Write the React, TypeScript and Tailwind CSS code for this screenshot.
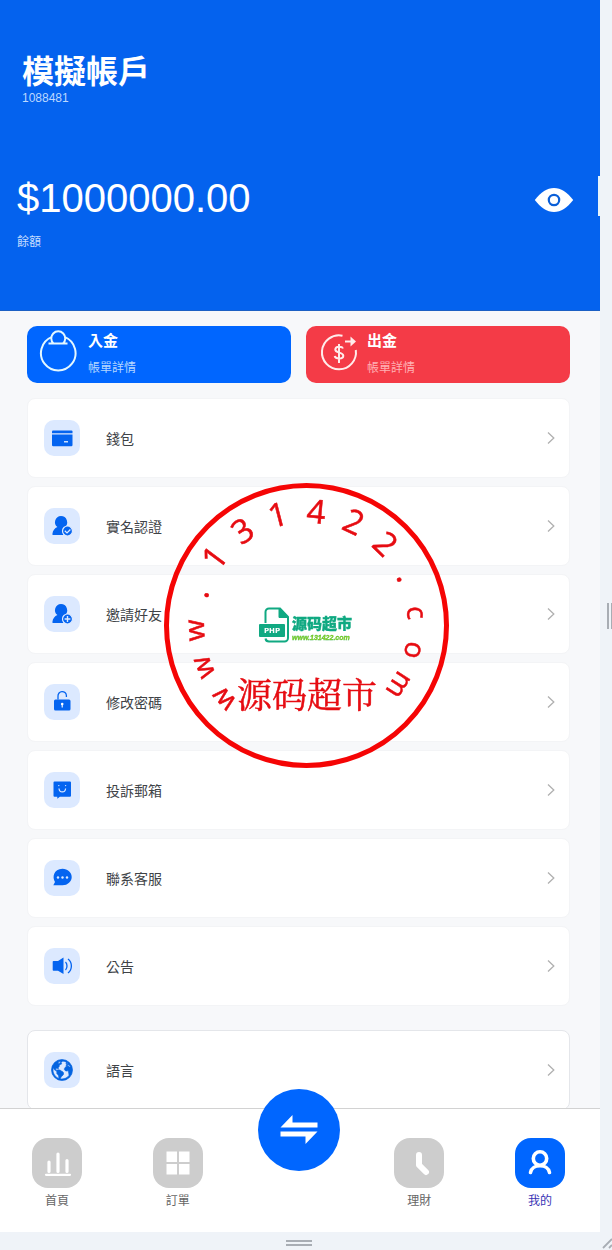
import type { ReactNode } from "react";
import { IoEarth } from "react-icons/io5";

const SANS = "font-['Liberation_Sans','Noto_Sans_CJK_TC',sans-serif]";

const menu: { label: string; icon: ReactNode }[] = [
  {
    label: "錢包",
    icon: (
      <svg viewBox="0 0 36 36" className="w-9 h-9" fill="#0464f0">
        <path d="M9 10.500h18.500a1 1 0 0 1 1 1v1.800H8v-1.800a1 1 0 0 1 1-1z" />
        <path d="M8 14.500h20.500V25a1.200 1.200 0 0 1-1.200 1.200H9.200A1.200 1.200 0 0 1 8 25z" />
        <path d="M20 21.800h4" stroke="#fff" strokeWidth="1.200" />
      </svg>
    ),
  },
  {
    label: "實名認證",
    icon: (
      <svg viewBox="0 0 36 36" className="w-9 h-9" fill="#0464f0">
        <Person />
        <circle cx="23.500" cy="23" r="5" fill="#0464f0" stroke="#dce9ff" strokeWidth="1.200" />
        <path d="M20.800 22.800l2.200 2.100 3.400-3.400" fill="none" stroke="#dce9ff" strokeWidth="1.300" />
      </svg>
    ),
  },
  {
    label: "邀請好友",
    icon: (
      <svg viewBox="0 0 36 36" className="w-9 h-9" fill="#0464f0">
        <Person />
        <circle cx="23.500" cy="23" r="5" fill="#0464f0" stroke="#dce9ff" strokeWidth="1.200" />
        <path d="M20.600 23h5.800M23.500 20.100v5.800" stroke="#dce9ff" strokeWidth="1.400" />
      </svg>
    ),
  },
  {
    label: "修改密碼",
    icon: (
      <svg viewBox="0 0 36 36" className="w-9 h-9">
        <rect x="10" y="15.500" width="16.500" height="11" rx="1.500" fill="#0464f0" />
        <path d="M14 15.500v-3.500a4.200 4.200 0 0 1 8.400-.500v1.500" fill="none" stroke="#0464f0" strokeWidth="1.300" />
        <circle cx="18.200" cy="20" r="1.300" fill="#fff" />
        <path d="M18.200 20v3.400" stroke="#fff" strokeWidth="1.100" />
      </svg>
    ),
  },
  {
    label: "投訴郵箱",
    icon: (
      <svg viewBox="0 0 36 36" className="w-9 h-9">
        <path d="M10.500 9.500h15.500a1 1 0 0 1 1 1v13.300a1 1 0 0 1-1 1H15.800L13.300 26.800v-2H10.500a1 1 0 0 1-1-1V10.500a1 1 0 0 1 1-1z" fill="#0464f0" />
        <path d="M15 16.500c.400 4.600 6.200 4.600 6.600 0" fill="none" stroke="#dce9ff" strokeWidth="1.200" />
        <circle cx="14.800" cy="13.600" r=".700" fill="#dce9ff" />
        <circle cx="21.600" cy="13.600" r=".700" fill="#dce9ff" />
      </svg>
    ),
  },
  {
    label: "聯系客服",
    icon: (
      <svg viewBox="0 0 36 36" className="w-9 h-9">
        <path d="M18.500 8.800c5.200 0 9.200 3.700 9.200 8.200s-4 8.300-9.200 8.300H9.300l1.700-3.300C8 17.500 9.600 8.800 18.500 8.800z" fill="#0464f0" />
        <g fill="#dce9ff">
          <circle cx="14" cy="17.500" r="1.200" />
          <circle cx="18.500" cy="17.500" r="1.200" />
          <circle cx="23" cy="17.500" r="1.200" />
        </g>
      </svg>
    ),
  },
  {
    label: "公告",
    icon: (
      <svg viewBox="0 0 36 36" className="w-9 h-9">
        <path d="M9.500 13H14l5.500-3.500v16.500L14 22.800H9.500a.800.800 0 0 1-.800-.800v-8.200a.800.800 0 0 1 .800-.800z" fill="#0464f0" />
        <path d="M21.500 14c2 2 2 6 0 8M24 11c4.500 3.500 4.500 10.500 0 14" fill="none" stroke="#0464f0" strokeWidth="1.300" />
      </svg>
    ),
  },
];

const ring = "www.131422.com".split("");

function Person() {
  return (
    <path d="M17 8a6.200 6.200 0 0 1 3.900 11c-1 1.200-2.400 3-2.200 5.200.100 1.200.500 2.100 1 2.800H9.300c-.600 0-1-.500-.900-1.100.400-3.200 2.200-5.600 5-6.800A6.200 6.200 0 0 1 17 8z" />
  );
}

function Chevron() {
  return (
    <svg viewBox="0 0 8 14" className="w-2 h-3.5" fill="none" stroke="#b0b0b0" strokeWidth="1.300">
      <path d="M1 1.500L6.800 7 1 12.500" />
    </svg>
  );
}

function MenuRow({ label, icon, className }: { label: string; icon: ReactNode; className: string }) {
  return (
    <button className={`flex shrink-0 items-center w-full h-20 pl-4 pr-3.5 rounded-lg bg-white border text-left ${className}`}>
      <span className="w-9 h-9 rounded-[10px] bg-[#dce9ff] flex items-center justify-center">{icon}</span>
      <span className="flex-1 ml-[26px] pt-0.5 text-sm text-[#404347]">{label}</span>
      <Chevron />
    </button>
  );
}

function NavItem({ label, active, children }: { label: string; active?: boolean; children: ReactNode }) {
  return (
    <a href="#" className="flex flex-col items-center w-[50px]">
      <span className={`w-[50px] h-[50px] rounded-2xl ${active ? "bg-[#0066ff]" : "bg-[#cdcdcd]"}`}>{children}</span>
      <span className={`mt-[5px] text-xs leading-4 ${active ? "text-[#3a34b5]" : "text-[#666]"}`}>{label}</span>
    </a>
  );
}

function Stamp() {
  return (
    <div className="fixed inset-0 flex items-center justify-center pointer-events-none">
      <svg viewBox="0 0 286 286" className="w-[286px] h-[286px]">
        <circle cx="143.500" cy="143.500" r="140" fill="none" stroke="#f50505" strokeWidth="5" />
        <g className="font-['Open_Sans',sans-serif]" fill="#e60c12" stroke="#e60c12" strokeWidth=".500" textAnchor="middle">
          {ring.map((c, i) => (
            <text key={i} x="143" y="41" fontSize={/[a-z]/.test(c) ? 28 : 33} transform={`rotate(${i * 19.6 - 132} 143 143)`}>
              {c}
            </text>
          ))}
        </g>
        <text x="74" y="226" fontSize="35" fill="#e60c12" stroke="#e60c12" strokeWidth=".500" className="font-['Noto_Serif_CJK_SC','Noto_Sans_CJK_SC',serif]">
          源码超市
        </text>
        {/* php file logo */}
        <path d="M102.500 141v-11a3.500 3.500 0 0 1 3.500-3.500h11l8 8.500v21a3.500 3.500 0 0 1-3.500 3.500h-15.500a3.500 3.500 0 0 1-3.500-3" fill="none" stroke="#10a982" strokeWidth="2" />
        <path d="M116 126v9.500h9.500z" fill="#10a982" stroke="#10a982" />
        <rect x="96" y="142" width="26" height="13" rx="1" fill="#10a982" />
        <text x="109" y="151" fontSize="7" fontWeight="700" fill="#fff" textAnchor="middle" className="font-['DejaVu_Sans',sans-serif]">
          PHP
        </text>
        <text x="129" y="147" fontSize="15" fontWeight="900" fill="#10a982" stroke="#10a982" strokeWidth=".400" className="font-['Noto_Sans_CJK_SC',sans-serif]">
          源码超市
        </text>
        <text x="129" y="158" fontSize="7" fontWeight="700" fontStyle="italic" fill="#a8dc00" stroke="#3db54a" strokeWidth=".300" className="font-['Liberation_Sans',sans-serif]">
          www.131422.com
        </text>
      </svg>
    </div>
  );
}

export default function App() {
  return (
    <div lang="zh-Hant" className={`h-screen flex flex-col bg-[#eff3f8] ${SANS}`}>
      <div className="flex flex-1 min-h-0">
        <div className="flex flex-col flex-1 min-w-0 bg-[#f7f8fa]">
          {/* Account header */}
          <header className="bg-[#0462ee] border-b border-[#1c60c4] pt-[54px] pb-15 text-white shrink-0">
            <h1 className="pl-[22px] text-[32px] leading-9 font-bold">模擬帳戶</h1>
            <p className="pl-[22px] text-xs leading-4 text-[#bdd8ff]">1088481</p>
            <div className="mt-[70px] pl-[17px] h-12 flex items-start">
              <span className="flex-1 text-[40px] leading-11">$1000000.00</span>
              <button aria-label="顯示餘額" className="self-center mr-6">
                <svg viewBox="0 0 40 26" className="w-10 h-[26px]">
                  <path d="M.800 13C7 5 13 1 20 1s13 4 19.200 12C33 21 27 25 20 25S7 21 .800 13z" fill="#fff" />
                  <circle cx="20" cy="13" r="5.200" fill="none" stroke="#0a5fd8" strokeWidth="2.200" />
                </svg>
              </button>
              <span className="w-0.5 h-10 bg-[#e6f4fb]" />
            </div>
            <p className="mt-2.5 pl-[17px] text-xs leading-4 text-[#c5ddff]">餘額</p>
          </header>

          <main className="flex-1 min-h-0 overflow-hidden flex flex-col pt-[15px] pl-[27px] pr-[30px]">
            <div className="grid grid-cols-2 gap-[15px] shrink-0">
              <button className="flex pt-1 pb-[5px] pl-[11px] rounded-[10px] bg-[#0066ff] text-left">
                <svg viewBox="0 0 40 44" className="w-10 h-11" fill="none" stroke="#e4f8ff" strokeWidth="2">
                  <path d="M13.500 7.200a17.300 17.300 0 1 0 13.500 0" />
                  <path d="M10.500 13.500h19M15.500 13.500a7 7 0 1 1 9.500 0" />
                </svg>
                <span className="ml-2.5 flex flex-col">
                  <span className="text-[15px] leading-[22px] font-bold text-white">入金</span>
                  <span className="mt-1.5 text-xs leading-5 text-[#b3d6ff]">帳單詳情</span>
                </span>
              </button>
              <button className="flex pt-1 pb-[5px] pl-[13px] rounded-[10px] bg-[#f43b47] text-left">
                <svg viewBox="0 0 40 44" className="w-10 h-11" fill="none" stroke="#ffeceb" strokeWidth="2">
                  <path d="M23.500 5.700A17 17 0 1 0 36.800 20" />
                  <path d="M26 11.500h6" />
                  <path d="M31.500 6.500l5.500 5-5.500 5z" fill="#ffeceb" stroke="none" />
                  <path d="M24 18.500c-1-2.500-7.500-2.600-7.700 1-.200 4 8 2.200 8 6.300 0 3.800-7.800 3.500-8.600.300M20 14v19" />
                </svg>
                <span className="ml-2 flex flex-col">
                  <span className="text-[15px] leading-[22px] font-bold text-white">出金</span>
                  <span className="mt-1.5 text-xs leading-5 text-[#ffb0b3]">帳單詳情</span>
                </span>
              </button>
            </div>

            <div className="mt-[15px] flex flex-col gap-2">
              {menu.map((m) => (
                <MenuRow key={m.label} label={m.label} icon={m.icon} className="border-[#f3f4f6]" />
              ))}
            </div>
            <div className="mt-6 flex flex-col">
              <MenuRow
                label="語言"
                icon={<IoEarth className="w-6 h-6 text-[#0464e0] stroke-[#0464e0] [stroke-width:14]" />}
                className="border-[#e4e6ea]"
              />
            </div>
          </main>

          {/* Bottom nav */}
          <nav className="relative shrink-0 flex justify-between items-start pt-[29px] pb-[23px] pl-8 pr-[35px] bg-white border-t border-[#d2d2d2]">
            <NavItem label="首頁">
              <svg viewBox="0 0 50 50" fill="none" stroke="#fff" strokeLinecap="round">
                <path d="M17 24v9.500M26 16v17.500M35 22.500v11" strokeWidth="3.200" />
                <path d="M14 36.800h24" strokeWidth="2.200" />
              </svg>
            </NavItem>
            <NavItem label="訂單">
              <svg viewBox="0 0 50 50" fill="#fff">
                <path d="M13.500 13.500h10.500v10.500H13.500zM26 13.500h10.500v10.500H26zM13.500 26h10.500v10.500H13.500zM26 26h10.500v10.500H26z" />
              </svg>
            </NavItem>
            <button aria-label="交易" className="-mt-[49px] -mx-4 w-[82px] h-[82px] rounded-full bg-[#0066ff]">
              <svg viewBox="0 0 82 82" fill="#fff">
                <path d="M22.500 38.500L34.500 26v7.500h25v5z" />
                <path d="M59.500 42.500L47.500 55v-7.500h-25v-5z" />
              </svg>
            </button>
            <NavItem label="理財">
              <svg viewBox="0 0 50 50" fill="none" stroke="#fff" strokeWidth="6" strokeLinecap="round" strokeLinejoin="round">
                <path d="M25 17v10l7 7" />
              </svg>
            </NavItem>
            <NavItem label="我的" active>
              <svg viewBox="0 0 50 50" fill="none" stroke="#fff" strokeWidth="3.600" strokeLinecap="round">
                <circle cx="25" cy="20.500" r="6.700" />
                <path d="M15.500 34.500c1.500-9 17.500-9 19 0" />
              </svg>
            </NavItem>
          </nav>
        </div>

        <div className="w-3 flex items-center justify-end gap-0.5">
          <span className="w-0.5 h-6.5 bg-[#a8adb4]" />
          <span className="w-px h-6.5 bg-[#a8adb4]" />
        </div>
      </div>

      <div className="h-[18px] flex items-center">
        <div className="flex-1 flex flex-col items-center gap-0.5 pt-1">
          <span className="w-6.5 h-0.5 bg-[#a8adb4]" />
          <span className="w-6.5 h-0.5 bg-[#a8adb4]" />
        </div>
        <svg viewBox="0 0 14 18" className="w-3.5 h-[18px]" stroke="#a8adb4" strokeWidth="1.800">
          <path d="M5 16L14 7M11 16l3-3" />
        </svg>
      </div>

      <Stamp />
    </div>
  );
}
